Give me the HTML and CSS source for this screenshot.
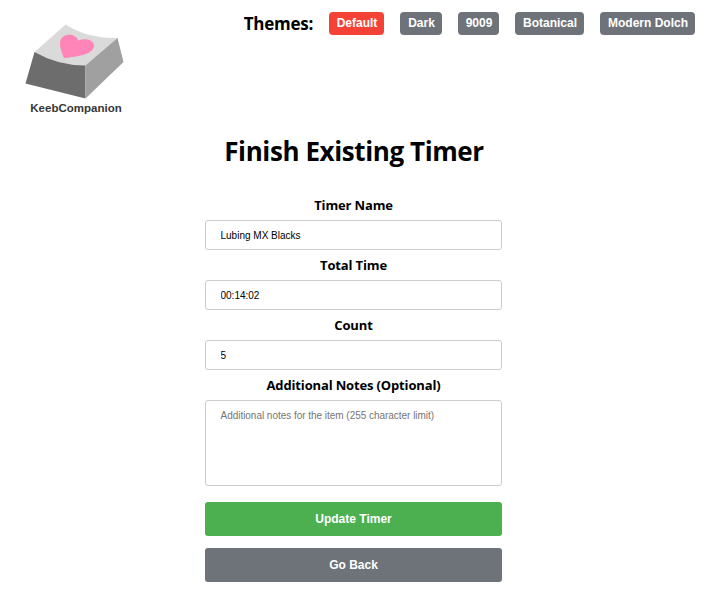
FILE: index.html
```html
<!DOCTYPE html>
<html lang="en">
<head>
<meta charset="utf-8">
<title>KeebCompanion</title>
<link rel="stylesheet" href="styles.css">
</head>
<body>
<header class="header">
  <a class="logo">
    <svg class="logo-mark" width="100" height="76" viewBox="0 0 100 76" aria-hidden="true">
      <path fill="#dadada" d="M40.700 0.500Q62 14.500 92.500 14L61 42Q33 41.500 9.500 28Z"/>
      <path fill="#6d6d6d" d="M9.500 28Q33 41.500 60.500 41.500L60.500 74.500L0.500 59.500Z"/>
      <path fill="#a0a0a0" d="M60.500 41.500L92.500 14L98.500 38L60.500 74.500Z"/>
      <path fill="#ff85b9" d="M39 34.200C37 29 34.500 23 35 18.500C36 9 50 8 53.500 16.500C60 13.500 70 16 69 22.500C67 31 54 32 39 34.200Z"/>
    </svg>
    <span class="logo-text">KeebCompanion</span>
  </a>
  <nav class="themes">
    <span class="themes-label">Themes:</span>
    <button class="theme theme-active">Default</button>
    <button class="theme theme-dark">Dark</button>
    <button class="theme theme-9009">9009</button>
    <button class="theme theme-botanical">Botanical</button>
    <button class="theme theme-dolch">Modern Dolch</button>
  </nav>
</header>
<main>
  <h1 class="title">Finish Existing Timer</h1>
  <form class="form">
    <label class="label" for="name">Timer Name</label>
    <input class="field" id="name" type="text" value="Lubing MX Blacks">
    <label class="label" for="time">Total Time</label>
    <input class="field" id="time" type="text" value="00:14:02">
    <label class="label" for="count">Count</label>
    <input class="field" id="count" type="text" value="5">
    <label class="label" for="notes">Additional Notes (Optional)</label>
    <textarea class="field notes" id="notes" placeholder="Additional notes for the item (255 character limit)"></textarea>
    <button class="action update" type="button">Update Timer</button>
    <button class="action back" type="button">Go Back</button>
  </form>
</main>
</body>
</html>
```
FILE: styles.css
```css
* { box-sizing: border-box; }
body {
  margin: 0;
  background: #fff;
  color: #000;
  font-family: "Open Sans", "Noto Sans", sans-serif;
}
.header {
  display: flex;
  justify-content: space-between;
  align-items: flex-start;
  height: 130px;
  padding: 12px 13px 0 25px;
}
.logo {
  display: flex;
  flex-direction: column;
  width: 102px;
  padding-top: 12px;
}
.logo-mark { display: block; }
.logo-text {
  align-self: center;
  color: #363636;
  font: bold 11.500px/14px "Liberation Sans", Arial, sans-serif;
  margin-top: 1px;
}
.themes { display: flex; gap: 16px; }
.themes-label {
  font-size: 17px;
  font-weight: 700;
  letter-spacing: -0.25px;
  line-height: 24px;
  white-space: nowrap;
}
.theme {
  width: 55px;
  height: 23px;
  padding: 0 0 0 1px;
  border: 0;
  border-radius: 4px;
  background: #6e737a;
  color: #fff;
  font: bold 12px/23px "Liberation Sans", Arial, sans-serif;
  white-space: nowrap;
}
.theme-active { background: #f44336; }
.theme-dark { width: 42px; }
.theme-9009 { width: 41px; }
.theme-botanical { width: 69px; }
.theme-dolch { width: 95px; }
.title {
  margin: 0;
  font-size: 26px;
  font-weight: 700;
  letter-spacing: -0.4px;
  line-height: 42px;
  text-align: center;
}
.form {
  display: flex;
  flex-direction: column;
  width: 297px;
  margin: 18px 0 0 205px;
}
.label {
  height: 30px;
  font-size: 13px;
  font-weight: 700;
  letter-spacing: -0.15px;
  line-height: 30px;
  text-align: center;
}
.field {
  display: block;
  width: 100%;
  height: 30px;
  margin: 0;
  padding: 0 14.500px;
  border: 1px solid #ccc;
  border-radius: 3px;
  background: #fff;
  color: #000;
  font: 10px/14px "Liberation Sans", Arial, sans-serif;
  outline: 0;
}
.notes {
  height: 86px;
  padding-top: 8px;
  resize: none;
}
.field::placeholder { color: #757575; opacity: 1; }
.notes::placeholder { letter-spacing: -0.03px; }
.action {
  height: 34px;
  padding: 0;
  border: 0;
  border-radius: 3px;
  color: #fff;
  font: bold 12px/34px "Liberation Sans", Arial, sans-serif;
}
.update { margin-top: 16px; background: #4caf50; }
.back { margin-top: 12px; background: #6e737a; }
```
